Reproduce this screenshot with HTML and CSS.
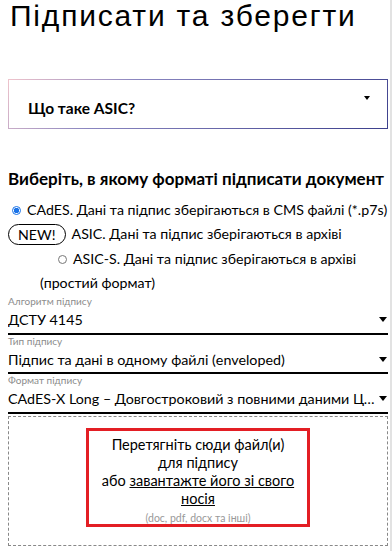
FILE: index.html
```html
<!DOCTYPE html>
<html lang="uk">
<head>
    <meta charset="UTF-8">
    <meta name="viewport" content="width=device-width, initial-scale=1.0">
    <title>Підписати та зберегти</title>
    <link rel="stylesheet" href="styles.css">
</head>
<body>
    <main class="page">
        <h1 class="title">Підписати та зберегти</h1>

        <div class="faq">
            <span class="faq-text">Що таке ASIC?</span>
            <span class="caret"></span>
        </div>

        <h2 class="section-title">Виберіть, в якому форматі підписати документ</h2>

        <div class="options">
            <div class="option"><span class="radio checked"></span>CAdES. Дані та підпис зберігаються в CMS файлі (*.p7s)</div>
            <div class="option"><span class="badge">NEW!</span>ASIC. Дані та підпис зберігаються в архіві</div>
            <div class="option sub"><span class="radio"></span>ASIC-S. Дані та підпис зберігаються в архіві (простий формат)</div>
        </div>

        <div class="field">
            <div class="field-label">Алгоритм підпису</div>
            <div class="select"><span class="select-text">ДСТУ 4145</span><span class="caret"></span></div>
        </div>
        <div class="field">
            <div class="field-label">Тип підпису</div>
            <div class="select"><span class="select-text">Підпис та дані в одному файлі (enveloped)</span><span class="caret"></span></div>
        </div>
        <div class="field">
            <div class="field-label">Формат підпису</div>
            <div class="select"><span class="select-text">CAdES-X Long – Довгостроковий з повними даними ЦСК для перевірки</span><span class="caret"></span></div>
        </div>

        <div class="dropzone">
            <div class="drop-inner">
                <p>Перетягніть сюди файл(и)<br>для підпису<br>або <a href="#">завантажте його зі свого носія</a></p>
                <p class="hint">(doc, pdf, docx та інші)</p>
            </div>
        </div>
    </main>
</body>
</html>
```

FILE: styles.css
```css
*{
    margin: 0;
    padding: 0;
    box-sizing: border-box;
}
body{
    font-family: "Lato", "Noto Sans", sans-serif;
    color: #000;
    background: #fff;
}
.page{
    width: 392px;
    height: 551px;
    padding: 0 2px 0 8px;
    border-right: 2px solid #e2e2e2;
    overflow: hidden;
}
.title{
    font-family: "Liberation Sans", Arial, sans-serif;
    font-weight: 400;
    font-size: 30px;
    line-height: 32px;
    letter-spacing: 1.8px;
    padding: 0 0 0 2px;
}
/* блок "Що таке ASIC?" */
.faq{
    margin-top: 47px;
    height: 50px;
    display: flex;
    align-items: center;
    justify-content: space-between;
    padding: 0 17px 0 19px;
    border: 1px solid;
    border-image: linear-gradient(135deg, #f0c4cc 0%, #8a86c0 30%, #3c3f8c 100%) 1;
}
.faq-text{
    font-size: 15.5px;
    font-weight: 700;
    padding-top: 7px;
}
.faq .caret{
    margin-top: -12px;
    border-left-width: 3px;
    border-right-width: 3px;
    border-top-width: 4px;
}
.caret{
    width: 0;
    height: 0;
    border-left: 4px solid transparent;
    border-right: 4px solid transparent;
    border-top: 5px solid #000;
}
.section-title{
    margin-top: 40px;
    font-size: 17px;
    font-weight: 700;
    line-height: 20px;
}
.options{
    margin-top: 9px;
    font-size: 14.2px;
    line-height: 24px;
}
.option{
    display: flex;
    align-items: center;
    white-space: nowrap;
}
.radio{
    display: inline-block;
    width: 9px;
    height: 9px;
    border: 1px solid #777;
    border-radius: 50%;
    margin: 0 6px 0 4px;
    flex-shrink: 0;
}
.radio.checked{
    border-color: #1a73e8;
    background: radial-gradient(circle, #1a73e8 0 2.5px, #fff 3px);
}
.badge{
    display: inline-block;
    border: 1px solid #000;
    border-radius: 12px;
    height: 21px;
    line-height: 19px;
    padding: 0 9px;
    margin-right: 6px;
}
.option.sub{
    display: block;
    white-space: normal;
    padding-left: 32px;
    text-indent: 18px;
    margin-top: 1px;
}
.option.sub .radio{
    margin: 0 6px 1px 0;
    vertical-align: middle;
    text-indent: 0;
}
.field-label{
    font-size: 10px;
    color: #8c8c8c;
    line-height: 12px;
}
.select{
    display: flex;
    align-items: center;
    justify-content: space-between;
    height: 27.5px;
    border-bottom: 2px solid #000;
    font-size: 14.3px;
}
.select-text{
    white-space: nowrap;
    overflow: hidden;
    text-overflow: ellipsis;
}
.select .caret{
    flex-shrink: 0;
    margin-right: 1px;
}
/* зона перетягування */
.dropzone{
    margin-top: 2px;
    height: 130px;
    border: 1px dashed #888;
    display: flex;
    justify-content: center;
    padding-top: 11px;
}
.drop-inner{
    width: 224px;
    height: 99px;
    border: 3px solid #e31e24;
    text-align: center;
    font-size: 14.5px;
    line-height: 18px;
    padding-top: 5px;
}
.drop-inner a{
    color: #000;
    text-decoration: underline;
}
.hint{
    margin-top: 3px;
    font-size: 10.5px;
    color: #999;
    line-height: 14px;
}
```
